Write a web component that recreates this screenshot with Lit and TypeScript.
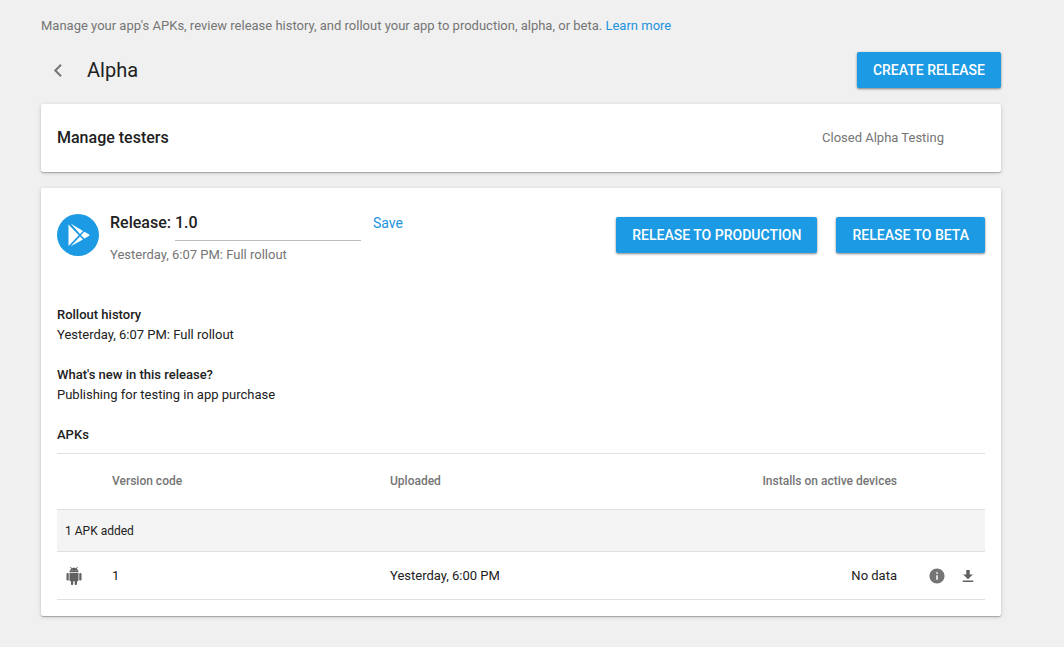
import { LitElement, html, css } from "lit";
import { customElement, property, state } from "lit/decorators.js";

interface Apk {
  version: string;
  uploaded: string;
  installs: string;
}

@customElement("raised-button")
class RaisedButton extends LitElement {
  @property() label = "";

  static styles = css`
    :host {
      display: block;
    }
    .button {
      display: block;
      height: 36px;
      padding: 0 16px;
      border: 0;
      border-radius: 2px;
      background: #1c9ae3;
      color: #fff;
      font: 500 14px/36px Roboto, sans-serif;
      text-transform: uppercase;
      white-space: nowrap;
      cursor: pointer;
      box-shadow: 0 1px 3px rgba(0, 0, 0, 0.28), 0 1px 2px rgba(0, 0, 0, 0.24);
    }
  `;

  render() {
    return html`<button class="button" type="button">${this.label}</button>`;
  }
}

@customElement("app-root")
class AppRoot extends LitElement {
  @state() private releaseName = "1.0";

  private apks: Apk[] = [
    { version: "1", uploaded: "Yesterday, 6:00 PM", installs: "No data" },
  ];

  static styles = css`
    :host {
      display: block;
      box-sizing: border-box;
      min-height: 100vh;
      padding: 16px 63px 31px 41px;
      background: #f0f0f0;
      color: #212121;
      font: 400 13px/20px Roboto, sans-serif;
    }
    .intro {
      margin: 0;
      color: #757575;
    }
    .link {
      color: #1c93df;
      text-decoration: none;
    }
    .bar {
      display: flex;
      align-items: center;
      gap: 16px;
      margin: 16px 0;
    }
    .icon-button {
      display: block;
      padding: 0;
      border: 0;
      background: none;
      color: #666;
      cursor: pointer;
    }
    .icon-button svg,
    .android {
      display: block;
    }
    .back {
      padding: 0 6px;
    }
    .title {
      flex: 1;
      margin: 0;
      font: 400 20px/36px Roboto, sans-serif;
    }
    .card {
      border-radius: 2px;
      background: #fff;
      box-shadow: 0 1px 4px rgba(0, 0, 0, 0.16), 0 1px 1px rgba(0, 0, 0, 0.24);
    }
    .testers {
      display: flex;
      align-items: center;
      justify-content: space-between;
      margin-bottom: 16px;
      padding: 24px 57px 24px 16px;
    }
    .subtitle {
      margin: 0;
      font: 500 16px/20px Roboto, sans-serif;
    }
    .muted {
      color: #757575;
    }
    .release {
      padding: 24px 16px 16px;
    }
    .head {
      display: flex;
      align-items: flex-start;
      gap: 11px;
      margin-bottom: 40px;
    }
    .logo {
      display: block;
      flex: none;
      margin-top: 2px;
    }
    .info {
      flex: 1;
    }
    .name {
      display: flex;
      align-items: flex-start;
      font: 500 16px/22px Roboto, sans-serif;
    }
    .name-input {
      box-sizing: border-box;
      flex: 0 1 186px;
      min-width: 0;
      height: 29px;
      margin: 0 12px 0 4px;
      padding: 0 0 8px;
      border: 0;
      border-bottom: 1px solid #bdbdbd;
      border-radius: 0;
      outline: 0;
      background: none;
      color: inherit;
      font: inherit;
    }
    .save {
      padding: 0;
      border: 0;
      background: none;
      color: #1c93df;
      font: 400 14px/22px Roboto, sans-serif;
      cursor: pointer;
    }
    .status {
      margin: 4px 0 0;
    }
    .actions {
      display: flex;
      gap: 19px;
      margin-top: 5px;
    }
    .section {
      margin: 0 0 20px;
    }
    .heading {
      margin: 0;
      font: 500 13px/20px Roboto, sans-serif;
    }
    .text {
      margin: 0;
    }
    .apks {
      width: 100%;
      margin-top: 8px;
      border-top: 1px solid #e0e0e0;
      border-spacing: 0;
      table-layout: fixed;
    }
    .apks th,
    .apks td {
      padding: 0;
      border-bottom: 1px solid #e0e0e0;
      text-align: left;
    }
    .apks thead th {
      height: 53px;
      padding-bottom: 2px;
      color: #757575;
      font-size: 12px;
      font-weight: 500;
    }
    .apks .group {
      height: 41px;
      padding-left: 8px;
      background: #f4f4f4;
      font-size: 12px;
      font-weight: 400;
    }
    .apks tbody td {
      height: 47px;
    }
    .apks .number {
      text-align: right;
    }
    .col-icon {
      width: 55px;
    }
    .col-version {
      width: 278px;
    }
    .col-tools {
      width: 88px;
    }
    .android {
      margin-left: 8px;
    }
    .tools {
      display: flex;
      justify-content: flex-end;
      gap: 13px;
      padding-right: 8px;
    }
  `;

  private onName(e: Event) {
    this.releaseName = (e.target as HTMLInputElement).value;
  }

  private renderApk(apk: Apk) {
    return html`
      <tr>
        <td>
          <svg class="android" width="18" height="18" viewBox="0 0 24 24" fill="#616161" aria-hidden="true">
            <path d="M6 18c0 .55.45 1 1 1h1v3.500c0 .83.67 1.500 1.500 1.500s1.500-.67 1.500-1.500V19h2v3.500c0 .83.67 1.500 1.500 1.500s1.500-.67 1.500-1.500V19h1c.55 0 1-.45 1-1V8H6v10zM3.500 8C2.670 8 2 8.670 2 9.500v7c0 .83.67 1.500 1.500 1.500S5 17.330 5 16.500v-7C5 8.670 4.330 8 3.500 8zm17 0c-.83 0-1.500.67-1.500 1.500v7c0 .83.67 1.500 1.500 1.500s1.500-.67 1.500-1.500v-7c0-.83-.67-1.500-1.500-1.500zm-4.970-5.840l1.300-1.300c.2-.2.2-.51 0-.71-.2-.2-.51-.2-.71 0l-1.480 1.480C13.850 1.230 12.950 1 12 1c-.96 0-1.860.23-2.660.63L7.850.15c-.2-.2-.51-.2-.71 0-.2.2-.2.51 0 .71l1.310 1.310C6.970 3.260 6 5.010 6 7h12c0-1.990-.97-3.750-2.470-4.840zM10 5H9V4h1v1zm5 0h-1V4h1v1z" />
          </svg>
        </td>
        <td>${apk.version}</td>
        <td>${apk.uploaded}</td>
        <td class="number">${apk.installs}</td>
        <td>
          <div class="tools">
            <button class="icon-button" type="button" aria-label="APK details">
              <svg width="18" height="18" viewBox="0 0 24 24" fill="#757575">
                <path d="M12 2C6.480 2 2 6.480 2 12s4.480 10 10 10 10-4.480 10-10S17.520 2 12 2zm1 15h-2v-6h2v6zm0-8h-2V7h2v2z" />
              </svg>
            </button>
            <button class="icon-button" type="button" aria-label="Download APK">
              <svg width="18" height="18" viewBox="0 0 24 24" fill="#616161">
                <path d="M18.500 10H14.300V4H9.700V10H5.500L12 16.300zM5 18v2h14v-2z" />
              </svg>
            </button>
          </div>
        </td>
      </tr>
    `;
  }

  render() {
    return html`
      <p class="intro">
        Manage your app's APKs, review release history, and rollout your app to production, alpha, or beta.
        <a class="link" href="#">Learn more</a>
      </p>
      <header class="bar">
        <button class="icon-button back" type="button" aria-label="Back">
          <svg width="18" height="18" viewBox="0 0 18 18" fill="none" stroke="#757575" stroke-width="2">
            <path d="M14 3.700L8.300 9.500l5.700 5.800" />
          </svg>
        </button>
        <h1 class="title">Alpha</h1>
        <raised-button label="Create release"></raised-button>
      </header>
      <section class="card testers">
        <h2 class="subtitle">Manage testers</h2>
        <span class="muted">Closed Alpha Testing</span>
      </section>
      <section class="card release">
        <div class="head">
          <svg class="logo" width="42" height="42" viewBox="0 0 42 42" aria-hidden="true">
            <circle cx="21" cy="21" r="21" fill="#1c9ae3" />
            <path d="M11.500 10.500v21.500l10.300-10.800zM13.700 9.600l9.300 10.300 3-3zM13.700 32.200l9.300-9.700 3 2.900zM27.200 17.700l-3.300 3.500 3.300 3.400 4.700-2.500q1.200-.9 0-1.800z" fill="#fff" />
          </svg>
          <div class="info">
            <div class="name">
              <label for="release-name">Release:</label>
              <input id="release-name" class="name-input" type="text" .value=${this.releaseName} @input=${this.onName} />
              <button class="save" type="button">Save</button>
            </div>
            <p class="status muted">Yesterday, 6:07 PM: Full rollout</p>
          </div>
          <div class="actions">
            <raised-button label="Release to production"></raised-button>
            <raised-button label="Release to beta"></raised-button>
          </div>
        </div>
        <div class="section">
          <h3 class="heading">Rollout history</h3>
          <p class="text">Yesterday, 6:07 PM: Full rollout</p>
        </div>
        <div class="section">
          <h3 class="heading">What's new in this release?</h3>
          <p class="text">Publishing for testing in app purchase</p>
        </div>
        <h3 class="heading">APKs</h3>
        <table class="apks">
          <colgroup>
            <col class="col-icon" />
            <col class="col-version" />
            <col />
            <col />
            <col class="col-tools" />
          </colgroup>
          <thead>
            <tr>
              <th></th>
              <th scope="col">Version code</th>
              <th scope="col">Uploaded</th>
              <th scope="col" class="number">Installs on active devices</th>
              <th></th>
            </tr>
          </thead>
          <tbody>
            <tr>
              <th class="group" colspan="5" scope="rowgroup">${this.apks.length} APK added</th>
            </tr>
            ${this.apks.map((apk) => this.renderApk(apk))}
          </tbody>
        </table>
      </section>
    `;
  }
}
